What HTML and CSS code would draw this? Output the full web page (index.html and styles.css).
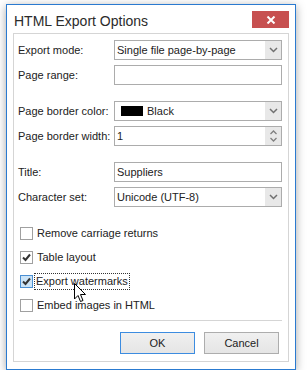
FILE: index.html
```html
<!DOCTYPE html>
<html lang="en">
<head>
    <meta charset="UTF-8">
    <title>HTML Export Options</title>
    <link rel="stylesheet" href="styles.css">
</head>
<body>

    <div class="window">
        <div class="titlebar">
            <span class="title">HTML Export Options</span>
            <div class="close">
                <svg width="10" height="8" viewBox="0 0 10 8">
                    <path d="M1.5 0.5 L8.5 7.5 M8.5 0.5 L1.5 7.5" stroke="#fff" stroke-width="2"/>
                </svg>
            </div>
        </div>

        <div class="panel">
            <div class="group">
                <label>Export mode:</label>
                <div class="field combo">
                    <span class="value">Single file page-by-page</span>
                    <span class="btn"><svg width="9" height="6" viewBox="0 0 9 6"><path d="M1 1 L4.5 4.5 L8 1" fill="none" stroke="#707070" stroke-width="1.5"/></svg></span>
                </div>
                <label>Page range:</label>
                <div class="field"></div>
            </div>

            <div class="group">
                <label>Page border color:</label>
                <div class="field combo">
                    <span class="value"><span class="swatch"></span>Black</span>
                    <span class="btn"><svg width="9" height="6" viewBox="0 0 9 6"><path d="M1 1 L4.5 4.5 L8 1" fill="none" stroke="#707070" stroke-width="1.5"/></svg></span>
                </div>
                <label>Page border width:</label>
                <div class="field combo">
                    <span class="value">1</span>
                    <span class="btn spin">
                        <svg width="9" height="5" viewBox="0 0 9 5"><path d="M1.5 4 L4.5 1 L7.5 4" fill="none" stroke="#808080" stroke-width="1.3"/></svg>
                        <svg width="9" height="5" viewBox="0 0 9 5"><path d="M1.5 1 L4.5 4 L7.5 1" fill="none" stroke="#808080" stroke-width="1.3"/></svg>
                    </span>
                </div>
            </div>

            <div class="group">
                <label>Title:</label>
                <div class="field"><span class="value">Suppliers</span></div>
                <label>Character set:</label>
                <div class="field combo">
                    <span class="value">Unicode (UTF-8)</span>
                    <span class="btn"><svg width="9" height="6" viewBox="0 0 9 6"><path d="M1 1 L4.5 4.5 L8 1" fill="none" stroke="#707070" stroke-width="1.5"/></svg></span>
                </div>
            </div>

            <div class="checks">
                <div class="check"><span class="box"></span><span>Remove carriage returns</span></div>
                <div class="check"><span class="box checked"><svg width="11" height="11" viewBox="0 0 11 11"><path d="M2 5.5 L4.5 8 L9 2.5" fill="none" stroke="#333" stroke-width="2"/></svg></span><span>Table layout</span></div>
                <div class="check"><span class="box checked hot"><svg width="11" height="11" viewBox="0 0 11 11"><path d="M2 5.5 L4.5 8 L9 2.5" fill="none" stroke="#333" stroke-width="2"/></svg></span><span class="focus">Export watermarks</span></div>
                <div class="check"><span class="box"></span><span>Embed images in HTML</span></div>
            </div>

            <div class="separator"></div>

            <div class="buttons">
                <button class="default">OK</button>
                <button>Cancel</button>
            </div>

            <svg class="cursor" width="13" height="20" viewBox="0 0 13 20">
                <path d="M0.5 0.5 L0.5 16 L4 12.5 L6.5 18.5 L9 17.5 L6.5 11.5 L11.5 11.5 Z" fill="#fff" stroke="#000" stroke-width="1"/>
            </svg>
        </div>
    </div>

</body>
</html>
```

FILE: styles.css
```css
* {
    box-sizing: border-box;
}
body {
    margin: 0;
    background-color: #fff;
    font-family: "Liberation Sans", Arial, sans-serif;
    font-size: 11px;
    color: #222;
}
.window {
    width: 290px;
    height: 366px;
    margin: 4px 0 0 6px;
    border: 1px solid #2a7ad0;
    background-color: #fff;
    box-shadow: 0 2px 9px rgba(0, 0, 0, 0.35);
    display: flex;
    flex-direction: column;
}
.titlebar {
    height: 28px;
    display: flex;
    justify-content: space-between;
    padding: 6px 6px 0 7px;
}
.title {
    font-size: 14px;
    color: #2b2b2b;
    line-height: 20px;
}
.close {
    width: 37px;
    height: 17px;
    background-color: #c75050;
    display: flex;
    align-items: center;
    justify-content: center;
}
.panel {
    position: relative;
    flex: 1;
    margin: 0 6px 7px 6px;
    border: 1px solid #d5d5d5;
    padding: 6px 6px 0 4px;
}
.group {
    display: grid;
    grid-template-columns: 96px 1fr;
    row-gap: 5px;
    margin-bottom: 16px;
}
.group label {
    display: flex;
    align-items: center;
    height: 20px;
}
.field {
    height: 20px;
    border: 1px solid #acacac;
    background-color: #fff;
    display: flex;
    align-items: center;
}
.value {
    flex: 1;
    padding-left: 2px;
    display: flex;
    align-items: center;
}
.swatch {
    display: inline-block;
    width: 22px;
    height: 10px;
    background-color: #000;
    margin: 0 4px 0 4px;
}
.btn {
    width: 16px;
    height: 18px;
    background-color: #e8e8e8;
    display: flex;
    align-items: center;
    justify-content: center;
}
.spin {
    flex-direction: column;
    gap: 2px;
}
.checks {
    margin-top: -2px;
    padding-left: 2px;
}
.check {
    height: 24px;
    display: flex;
    align-items: center;
    gap: 4px;
}
.box {
    width: 13px;
    height: 13px;
    border: 1px solid #a0a0a0;
    background-color: #fff;
    display: flex;
    align-items: center;
    justify-content: center;
}
.box.hot {
    background-color: #cce4f7;
    border-color: #4a8fd3;
}
.focus {
    outline: 1px dotted #333;
    padding: 1px 1px 2px 1px;
    margin-left: -2px;
}
.separator {
    height: 1px;
    background-color: #d5d5d5;
    margin: 3px 0 11px 1px;
}
.buttons {
    display: flex;
    justify-content: flex-end;
    gap: 9px;
    padding-right: 3px;
}
.buttons button {
    width: 75px;
    height: 22px;
    font-family: "Liberation Sans", Arial, sans-serif;
    font-size: 11px;
    color: #222;
    border: 1px solid #adadad;
    background: linear-gradient(#f0f0f0, #e5e5e5);
}
.buttons button.default {
    border-color: #3c8ce0;
}
.cursor {
    position: absolute;
    left: 60px;
    top: 249px;
}
```
